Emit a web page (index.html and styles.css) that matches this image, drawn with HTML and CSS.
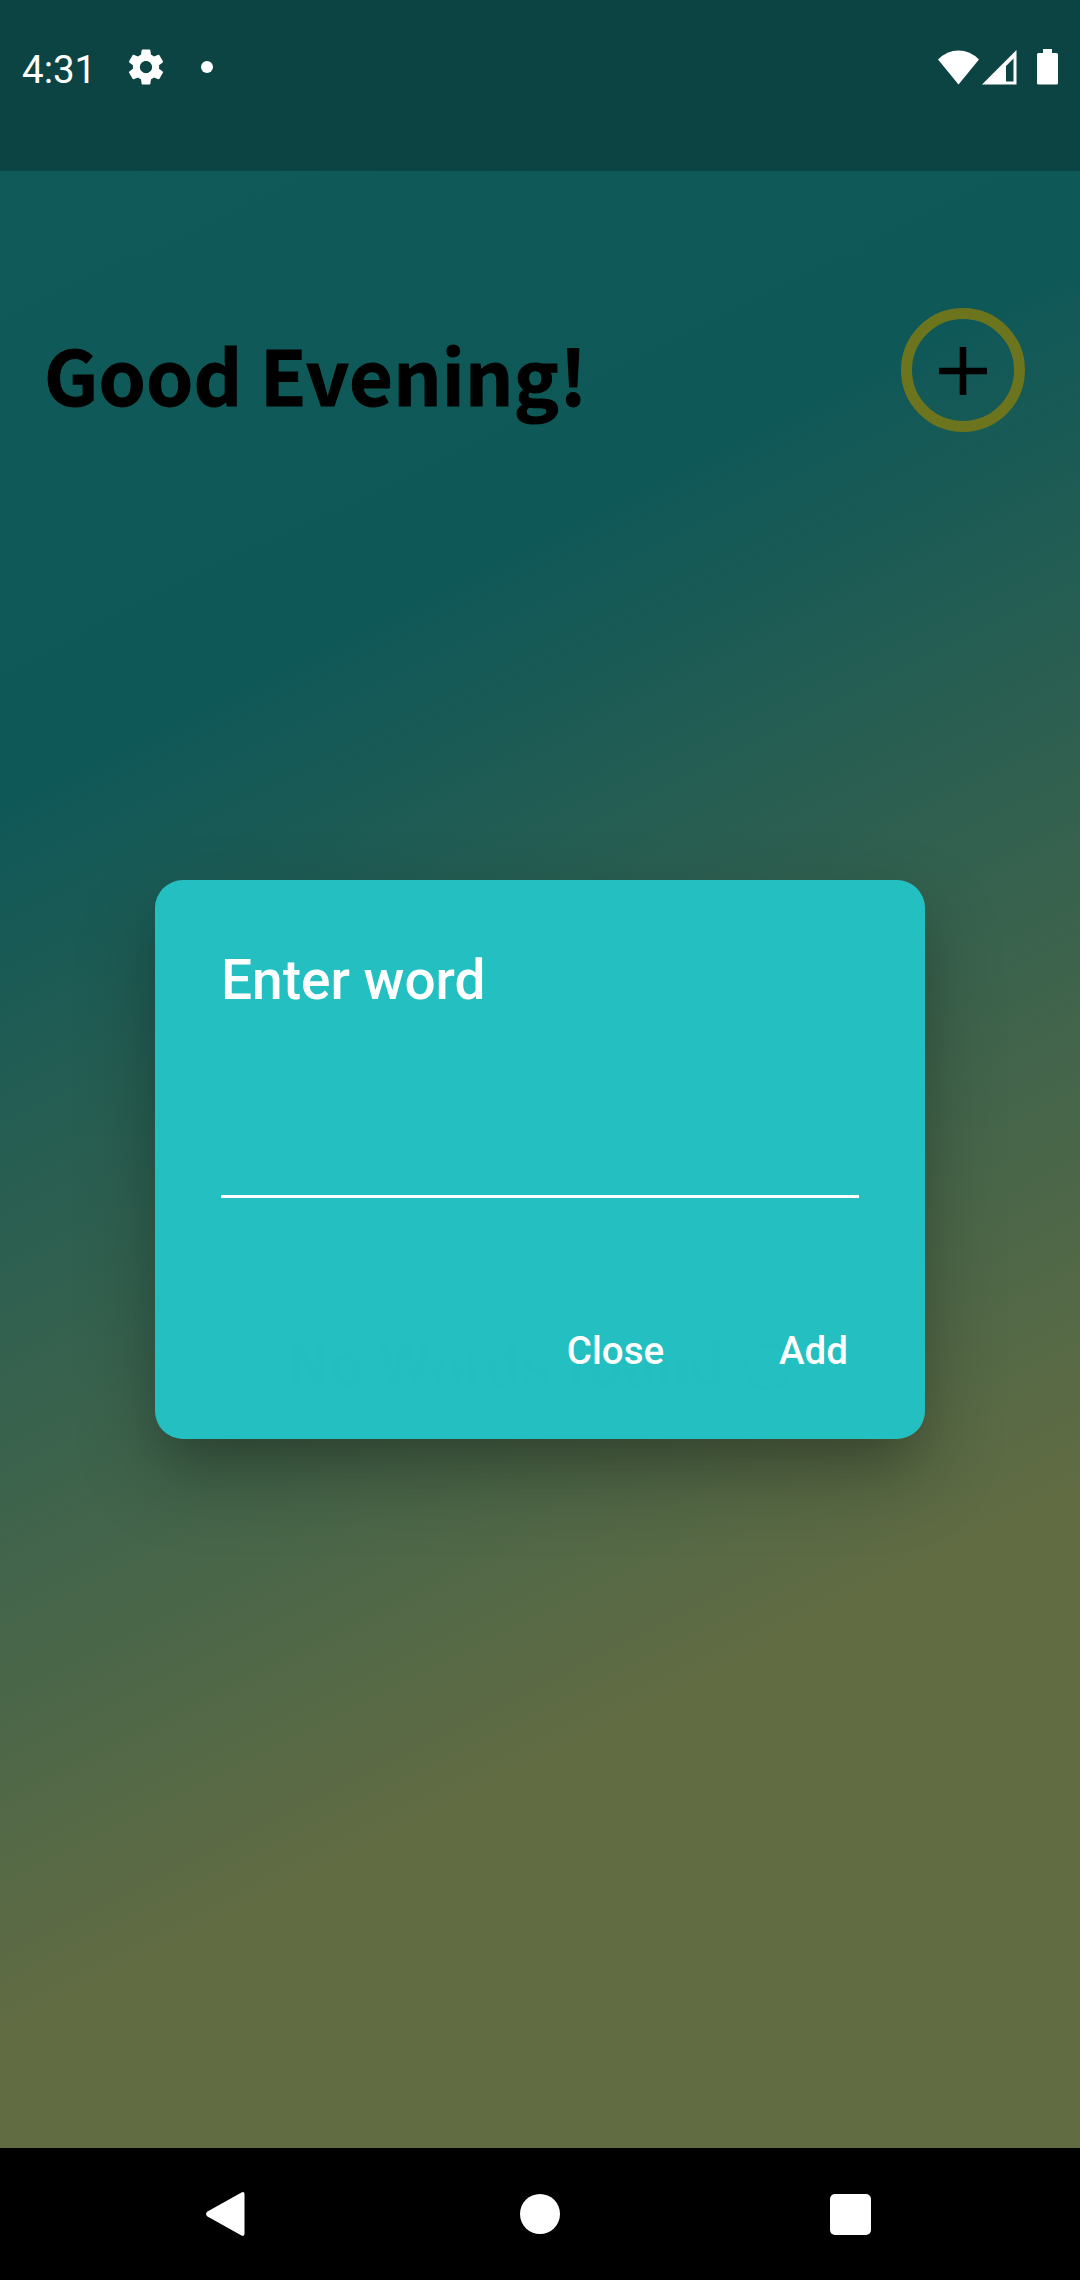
FILE: index.html
```html
<!DOCTYPE html>
<html lang="en">
<head>
<meta charset="utf-8">
<title>Words</title>
<link rel="stylesheet" href="styles.css">
</head>
<body>
<div class="phone">
  <div class="screen">
    <header class="status">
      <span class="time">4:31</span>
      <svg class="gear" viewBox="0 0 24 24"><path d="M19.43 12.98c.04-.32.07-.64.07-.98s-.03-.66-.07-.98l2.11-1.65c.19-.15.24-.42.12-.64l-2-3.46c-.12-.22-.39-.3-.61-.22l-2.49 1c-.52-.4-1.08-.73-1.69-.98l-.38-2.65C14.46 2.18 14.25 2 14 2h-4c-.25 0-.46.18-.49.42l-.38 2.65c-.61.25-1.17.59-1.69.98l-2.49-1c-.23-.09-.49 0-.61.22l-2 3.46c-.13.22-.07.49.12.64l2.11 1.65c-.04.32-.07.65-.07.98s.03.66.07.98l-2.11 1.65c-.19.15-.24.42-.12.64l2 3.46c.12.22.39.3.61.22l2.49-1c.52.4 1.08.73 1.69.98l.38 2.65c.03.24.24.42.49.42h4c.25 0 .46-.18.49-.42l.38-2.65c.61-.25 1.17-.59 1.69-.98l2.49 1c.23.09.49 0 .61-.22l2-3.46c.12-.22.07-.49-.12-.64l-2.11-1.65zM12 15.5c-1.93 0-3.5-1.57-3.5-3.5s1.57-3.5 3.5-3.5 3.5 1.57 3.5 3.5-1.57 3.5-3.5 3.5z"/></svg>
      <span class="dot"></span>
      <span class="tray">
        <svg class="wifi" viewBox="0 0 41 35"><path d="M0 9.5Q9 .5 20.500.5T41 9.500L20.500 34.500Z"/></svg>
        <svg class="signal" viewBox="0 0 35 35"><path fill-rule="evenodd" d="M34.500 0V34.500H0ZM31.500 8.500L24 16V31.500H31.500Z"/></svg>
        <svg class="battery" viewBox="0 0 21 36"><path d="M6 0h9v4h4.500a1.500 1.500 0 0 1 1.500 1.500v28.500a1.500 1.500 0 0 1-1.500 1.500h-18a1.500 1.500 0 0 1-1.500-1.500v-28.500a1.500 1.500 0 0 1 1.500-1.500h4.500z"/></svg>
      </span>
    </header>
    <section class="greeting">
      <h1>Good Evening!</h1>
      <button class="plus" aria-label="Add word"><svg viewBox="0 0 48 48"><path d="M24 0V48M0 24H48"/></svg></button>
    </section>
    <main class="empty">
      <span>No Words found</span>
      <svg class="face" viewBox="0 0 50 50"><circle cx="25" cy="25" r="22"/><path d="M14 36Q25 24 36 36M17 17v4M33 17v4"/></svg>
    </main>
    <div class="dialog" role="dialog">
      <h2>Enter word</h2>
      <div class="field"></div>
      <div class="actions"><button>Close</button><button>Add</button></div>
    </div>
  </div>
  <nav class="nav">
    <svg class="back" viewBox="0 0 40 46"><path d="M35.500 1.500Q38.500 0 38.500 3.500V42.500Q38.500 46 35.500 44.500L1.500 25.500Q-1.500 23 1.500 20.500Z"/></svg>
    <span class="home"></span>
    <span class="recent"></span>
  </nav>
</div>
</body>
</html>
```
FILE: styles.css
```css
* { box-sizing: border-box; }
body { margin: 0; font-family: Roboto, sans-serif; }
h1, h2 { margin: 0; }
button { border: 0; background: none; padding: 0; font: inherit; color: inherit; }
svg { display: block; }

.phone { width: 1080px; height: 2280px; display: flex; flex-direction: column; background: #000; overflow: hidden; }
.screen {
  position: relative;
  height: 2148px;
  display: flex;
  flex-direction: column;
  background: linear-gradient(153.31deg, #105a59 0%, #0f5858 30%, #616c43 75.5%);
}

.status { height: 171px; padding: 45px 22px 0; display: flex; align-items: flex-start; background: #0c4443; color: #fff; }
.time { width: 103px; font-size: 38.5px; line-height: 49px; }
.gear { width: 42px; height: 42px; margin-top: 1px; fill: #fff; }
.dot { width: 12px; height: 12px; margin: 16px 0 0 34px; border-radius: 50%; background: #fff; }
.tray { display: flex; margin: 4px 0 0 auto; fill: #fff; }
.wifi { width: 41px; height: 35px; margin-top: 1px; }
.signal { width: 35px; height: 35px; margin: 1px 20px 0 3px; }
.battery { width: 21px; height: 36px; }

.greeting { display: flex; justify-content: space-between; padding: 137px 55px 0 44px; }
.greeting h1 { height: 110px; margin-top: 10px; font: 700 75.6px/110px "Noto Sans CJK SC", sans-serif; letter-spacing: 0.25px; color: #000; white-space: nowrap; -webkit-text-stroke: 1px #000; }
.plus { width: 124px; height: 124px; border: 11px solid #6c751e; border-radius: 50%; display: grid; place-items: center; }
.plus svg { width: 48px; height: 48px; margin-top: 1px; stroke: #000; stroke-width: 6.6; }

.empty { margin-top: 889px; height: 90px; display: flex; justify-content: center; align-items: center; gap: 19px; font-size: 60.5px; line-height: 90px; font-weight: 700; color: #000; }
.face { width: 50px; height: 50px; fill: none; stroke: #000; stroke-width: 4.5; }

.dialog {
  position: absolute;
  left: 155px;
  top: 880px;
  width: 770px;
  height: 559px;
  padding: 67px 66px;
  border-radius: 28px;
  background: rgba(36, 193, 195, 0.985);
  color: #fff;
  box-shadow: 0 30px 42px -19px rgba(0, 0, 0, 0.16), 0 36px 80px 2px rgba(0, 0, 0, 0.24);
}
.dialog h2 { font-size: 55px; line-height: 66px; font-weight: 500; }
.field { height: 185px; border-bottom: 3px solid #fff; }
.actions { display: flex; justify-content: flex-end; gap: 115px; padding: 130px 11px 0 0; font-size: 38.5px; line-height: 46px; font-weight: 500; }

.nav { height: 132px; display: flex; align-items: center; padding: 0 209px 0 206px; justify-content: space-between; }
.back { width: 40px; height: 46px; fill: #fff; }
.home { width: 40px; height: 40px; margin-left: 4px; border-radius: 50%; background: #fff; }
.recent { width: 41px; height: 41px; border-radius: 5px; background: #fff; }
```
